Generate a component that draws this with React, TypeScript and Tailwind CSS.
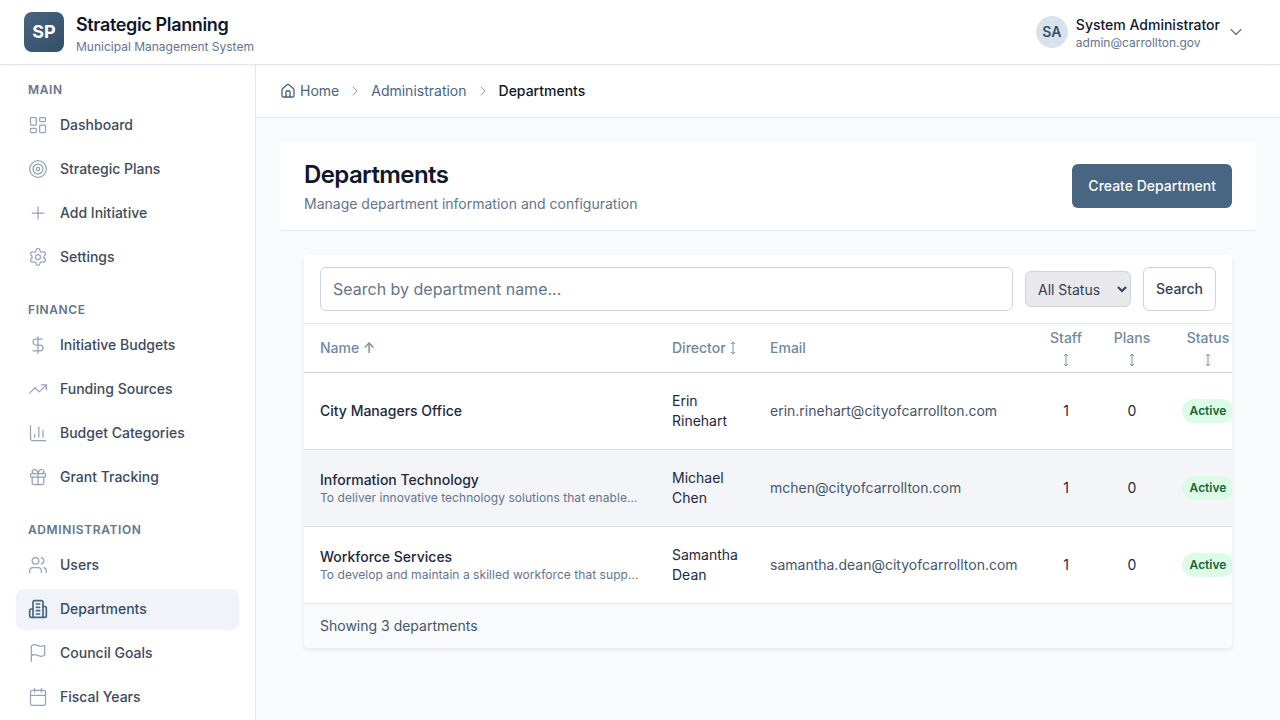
import type { SVGProps } from 'react'
import {
    Calendar,
    ChartColumn,
    ChevronDown,
    ChevronRight,
    DollarSign,
    Flag,
    Gift,
    House,
    LayoutDashboard,
    Plus,
    Settings,
    Target,
    TrendingUp,
    Users,
} from 'lucide-react'

// older lucide building, the package's current one has a door instead of the floor lines
function BuildingIcon({ strokeWidth, ...props }: SVGProps<SVGSVGElement>) {
    return (
        <svg
            viewBox="0 0 24 24"
            fill="none"
            stroke="currentColor"
            strokeWidth={strokeWidth}
            strokeLinecap="round"
            strokeLinejoin="round"
            {...props}
        >
            <path d="M6 22V4a2 2 0 0 1 2-2h8a2 2 0 0 1 2 2v18Z" />
            <path d="M6 12H4a2 2 0 0 0-2 2v6a2 2 0 0 0 2 2h2" />
            <path d="M18 9h2a2 2 0 0 1 2 2v9a2 2 0 0 1-2 2h-2" />
            <path d="M10 6h4M10 10h4M10 14h4M10 18h4" />
        </svg>
    )
}

const sections = [
    {
        label: 'Main',
        items: [
            { name: 'Dashboard', icon: LayoutDashboard },
            { name: 'Strategic Plans', icon: Target },
            { name: 'Add Initiative', icon: Plus },
            { name: 'Settings', icon: Settings },
        ],
    },
    {
        label: 'Finance',
        items: [
            { name: 'Initiative Budgets', icon: DollarSign },
            { name: 'Funding Sources', icon: TrendingUp },
            { name: 'Budget Categories', icon: ChartColumn },
            { name: 'Grant Tracking', icon: Gift },
        ],
    },
    {
        label: 'Administration',
        items: [
            { name: 'Users', icon: Users },
            { name: 'Departments', icon: BuildingIcon, active: true },
            { name: 'Council Goals', icon: Flag },
            { name: 'Fiscal Years', icon: Calendar },
        ],
    },
]

const departments = [
    {
        name: 'City Managers Office',
        description: '',
        director: ['Erin', 'Rinehart'],
        email: 'erin.rinehart@cityofcarrollton.com',
    },
    {
        name: 'Information Technology',
        description: 'To deliver innovative technology solutions that enable...',
        director: ['Michael', 'Chen'],
        email: 'mchen@cityofcarrollton.com',
        hovered: true,
    },
    {
        name: 'Workforce Services',
        description: 'To develop and maintain a skilled workforce that supp...',
        director: ['Samantha', 'Dean'],
        email: 'samantha.dean@cityofcarrollton.com',
    },
]

function SortIcon({ stacked }: { stacked?: boolean }) {
    return (
        <svg
            viewBox="0 0 8 14"
            className={`inline-block h-[14px] w-2 text-[#7b93ab] ${stacked ? 'align-[-4px]' : 'align-[-2px]'}`}
            fill="none"
            stroke="currentColor"
            strokeWidth="1"
        >
            <path d="M4 1v12M2 3l2-2 2 2M2 11l2 2 2-2" />
        </svg>
    )
}

function Sidebar() {
    return (
        <aside className="w-[256px] shrink-0 border-r border-[#e2e8f0] bg-white px-4 pt-4 overflow-hidden">
            <div className="flex flex-col gap-6">
                {sections.map((section) => (
                    <div key={section.label}>
                        <div className="px-3 mb-2 h-4 text-xs leading-[18px] font-semibold uppercase tracking-[0.05em] text-[#64748b]">
                            {section.label}
                        </div>
                        <div className="flex flex-col gap-1">
                            {section.items.map((item) => (
                                <div
                                    key={item.name}
                                    className={`flex items-center gap-3 h-10 px-3 rounded-lg text-sm font-medium ${
                                        item.active ? 'bg-[#f0f4f8] text-[#334e68] shadow-xs' : 'text-[#3d4a5c]'
                                    }`}
                                >
                                    <item.icon
                                        className={`h-5 w-5 shrink-0 ${item.active ? 'text-[#486581]' : 'text-[#94a3b8]'}`}
                                        strokeWidth={item.active ? 2 : 1.5}
                                    />
                                    <span>{item.name}</span>
                                </div>
                            ))}
                        </div>
                    </div>
                ))}
            </div>
        </aside>
    )
}

export default function App() {
    return (
        <div className="h-screen flex flex-col overflow-hidden bg-[#f8fafc] antialiased font-['Inter',sans-serif]">
            <header className="h-[65px] shrink-0 flex items-center justify-between pl-6 pr-[34px] bg-white border-b border-[#e2e8f0] shadow-xs relative">
                <div className="flex items-center gap-3">
                    <div className="h-10 w-10 rounded-lg bg-gradient-to-br from-[#486581] to-[#334e68] flex items-center justify-center text-white font-bold text-lg">
                        SP
                    </div>
                    <div className="pt-0.5">
                        <div className="text-lg leading-7 font-semibold tracking-[-0.02em] text-[#0f172a]">Strategic Planning</div>
                        <div className="text-xs leading-4 text-[#64748b]">Municipal Management System</div>
                    </div>
                </div>
                <div className="flex items-center gap-2">
                    <div className="h-8 w-8 rounded-full bg-[#d9e2ec] flex items-center justify-center text-sm font-semibold text-[#334e68]">
                        SA
                    </div>
                    <div className="pt-0.5">
                        <div className="text-sm leading-5 font-medium text-[#0f172a]">System Administrator</div>
                        <div className="text-xs leading-4 text-[#64748b]">admin@carrollton.gov</div>
                    </div>
                    <ChevronDown className="h-5 w-5 -ml-0.5 text-[#64748b]" strokeWidth={1.5} />
                </div>
            </header>

            <div className="flex flex-1 min-h-0">
                <Sidebar />

                <main className="flex-1 min-w-0">
                    <nav className="h-[53px] flex items-center gap-2 px-6 bg-white border-b border-[#e2e8f0] text-sm">
                        <span className="flex items-center gap-1 text-[#486581]">
                            <House className="h-4 w-4" strokeWidth={2} />
                            Home
                        </span>
                        <ChevronRight className="h-4 w-4 text-[#94a3b8]" strokeWidth={1.5} />
                        <span className="text-[#486581]">Administration</span>
                        <ChevronRight className="h-4 w-4 text-[#94a3b8]" strokeWidth={1.5} />
                        <span className="font-medium text-[#0f172a]">Departments</span>
                    </nav>

                    <div className="p-6">
                        <div className="flex items-center justify-between h-[89px] px-6 bg-white border-b border-[#e2e8f0]">
                            <div>
                                <h1 className="pt-px text-2xl leading-8 font-semibold tracking-[-0.025em] text-[#0f172a]">Departments</h1>
                                <p className="mt-[3px] text-sm leading-5 text-[#64748b]">
                                    Manage department information and configuration
                                </p>
                            </div>
                            <button className="h-11 px-4 rounded-md bg-[#486581] text-sm font-medium text-white">
                                Create Department
                            </button>
                        </div>

                        <div className="mt-6 mx-6 bg-white rounded-[4px] shadow-[0_2px_4px_rgba(15,23,42,0.08)] overflow-hidden">
                            <div className="flex items-center gap-3 px-4 py-3 border-b border-[#e2e8f0]">
                                <input
                                    type="text"
                                    placeholder="Search by department name..."
                                    className="flex-1 h-11 px-3 rounded-md border border-[#cbd5e1] text-base text-[#0f172a] placeholder:text-[#64748b]"
                                />
                                <select className="w-[106px] h-9 pl-2 rounded-md border border-[#cbd5e1] bg-[#e8e8ed] text-sm text-[#334155]">
                                    <option>All Status</option>
                                </select>
                                <button className="h-11 px-3 rounded-md border border-[#cbd5e1] bg-white text-sm font-medium text-[#334155]">
                                    Search
                                </button>
                            </div>

                            <table className="table-fixed w-[946px] border-collapse text-sm">
                                <colgroup>
                                    <col className="w-[352px]" />
                                    <col className="w-[98px]" />
                                    <col className="w-[280px]" />
                                    <col className="w-[64px]" />
                                    <col className="w-[68px]" />
                                    <col className="w-[84px]" />
                                </colgroup>
                                <thead>
                                    <tr className="h-[48px] border-b border-[#cbd5e1] text-left text-[#7089a3]">
                                        <th className="px-4 font-medium">Name ↑</th>
                                        <th className="px-4 font-medium whitespace-nowrap">
                                            Director <SortIcon />
                                        </th>
                                        <th className="px-4 font-medium">Email</th>
                                        <th className="font-medium text-center leading-5">
                                            Staff
                                            <br />
                                            <SortIcon stacked />
                                        </th>
                                        <th className="font-medium text-center leading-5">
                                            Plans
                                            <br />
                                            <SortIcon stacked />
                                        </th>
                                        <th className="font-medium text-center leading-5">
                                            Status
                                            <br />
                                            <SortIcon stacked />
                                        </th>
                                    </tr>
                                </thead>
                                <tbody>
                                    {departments.map((dept) => (
                                        <tr
                                            key={dept.name}
                                            className={`h-[77px] border-b border-[#d9e2ec] last:border-[#e2e8f0] ${dept.hovered ? 'bg-[#f3f5f8]' : ''}`}
                                        >
                                            <td className="px-4">
                                                <div className="font-medium leading-5 text-[#1e293b]">{dept.name}</div>
                                                {dept.description && (
                                                    <div className="text-xs leading-4 tracking-[0.05px] text-[#64748b] whitespace-nowrap">
                                                        {dept.description}
                                                    </div>
                                                )}
                                            </td>
                                            <td className="px-4 leading-5 text-[#1e293b]">
                                                {dept.director[0]}
                                                <br />
                                                {dept.director[1]}
                                            </td>
                                            <td className="px-4 text-[#475569]">{dept.email}</td>
                                            <td className="text-center text-[#1e293b]">1</td>
                                            <td className="text-center text-[#1e293b]">0</td>
                                            <td className="text-center">
                                                <span className="inline-block px-2 py-[3px] rounded-full bg-[#dcfce7] text-xs leading-[18px] font-semibold text-[#166534]">
                                                    Active
                                                </span>
                                            </td>
                                        </tr>
                                    ))}
                                </tbody>
                            </table>

                            <div className="h-11 flex items-center px-4 bg-[#f8fafc] text-sm text-[#475569]">
                                Showing 3 departments
                            </div>
                        </div>
                    </div>
                </main>
            </div>
        </div>
    )
}
